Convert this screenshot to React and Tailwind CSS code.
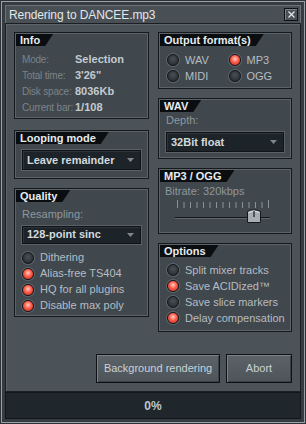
import React from "react";

const font = { fontFamily: '"Liberation Sans", Arial, sans-serif' };

function Tab({ children }) {
  return (
    <div className="flex">
      <div className="h-[12px] bg-[#0b0e11] pl-[4px] pr-[13px] text-[11px] leading-[12px] font-bold text-[#e6ecf0] [clip-path:polygon(0_0,100%_0,calc(100%-8px)_100%,0_100%)]">
        {children}
      </div>
    </div>
  );
}

function Panel({ title, className = "", children }) {
  return (
    <div
      className={`border border-[#15191c] bg-[#40474d] p-px shadow-[inset_1px_1px_0_#5b6369,inset_-1px_-1px_0_#5b6369] ${className}`}
    >
      <Tab>{title}</Tab>
      {children}
    </div>
  );
}

function Radio({ on, label }) {
  return (
    <div className="flex items-center h-[16px] gap-[6px]">
      <div
        className={`w-[12px] h-[12px] shrink-0 rounded-full border border-[#15191c] shadow-[0_0_0_1px_#5e666c] ${
          on
            ? "bg-[radial-gradient(circle_at_50%_40%,#ffd0c4_0%,#ff5a48_45%,#c0281c_100%)]"
            : "bg-[radial-gradient(circle_at_50%_40%,#4a5055_0%,#2c3135_70%,#202427_100%)]"
        }`}
      />
      <span className="text-[11px] whitespace-nowrap text-[#b4bdc3]">{label}</span>
    </div>
  );
}

function Select({ value, className = "" }) {
  return (
    <div
      className={`flex items-center justify-between border border-[#101316] bg-[#1d2429] shadow-[0_0_0_1px_#596167,inset_1px_1px_0_#2c343a] pl-[4px] pr-[6px] ${className}`}
    >
      <span className="text-[11px] font-bold text-[#d2dade]">{value}</span>
      <svg width="7" height="4" viewBox="0 0 7 4">
        <path d="M0 0 H7 L3.5 4 Z" fill="#7e878d" />
      </svg>
    </div>
  );
}

function InfoRow({ label, value }) {
  return (
    <div className="flex h-[16px] items-center whitespace-nowrap">
      <span className="w-[53px] shrink-0 text-[10px] tracking-[-0.2px] text-[#7b848a]">{label}</span>
      <span className="text-[11px] font-bold text-[#c3cbd0]">{value}</span>
    </div>
  );
}

function Slider() {
  const ticks = [];
  for (let i = 0; i < 15; i++) {
    const x = 2.5 + i * 6.5;
    const tall = i === 0 || i === 14;
    ticks.push(
      <line key={i} x1={x} x2={x} y1={tall ? 0 : 2} y2={8} stroke="#8b9399" strokeWidth="1" />
    );
  }
  return (
    <svg width="100" height="26" viewBox="0 0 100 26" className="ml-[15px] mt-[2px]">
      {ticks}
      <line x1="0" x2="95" y1="17.5" y2="17.5" stroke="#14181b" strokeWidth="1" />
      <line x1="0" x2="95" y1="18.5" y2="18.5" stroke="#5f676d" strokeWidth="1" />
      <path d="M72.5 11.5 Q78.5 8 85.5 11.5 V22.5 H72.5 Z" fill="#a6aeb3" stroke="#14181b" />
      <path d="M73.5 12.5 Q78.5 9.5 84.5 12.5" fill="none" stroke="#dfe5e8" />
      <line x1="79" x2="79" y1="11" y2="17" stroke="#14181b" strokeWidth="1.2" />
    </svg>
  );
}

function Button({ children, className = "" }) {
  return (
    <div
      className={`flex items-center justify-center border border-[#0f1214] bg-[linear-gradient(#5b6369,#4d555b)] shadow-[inset_1px_1px_0_#7a8288,inset_-1px_-1px_0_#3a4146] text-[11px] text-[#c9d1d6] ${className}`}
    >
      {children}
    </div>
  );
}

export default function App() {
  return (
    <div className="w-[306px] h-[424px] bg-[#2d3237] p-px" style={font}>
      <div className="h-full border border-[#9aa1a6] bg-[#353b40] p-[3px] flex flex-col">
        <div className="h-[18px] flex items-center justify-between pl-[3px] pr-[2px] bg-[#484f55] border-x border-t border-[#6b7379]">
          <span className="text-[12px] text-[#e2e7ea] tracking-[-0.1px]">Rendering to DANCEE.mp3</span>
          <div className="w-[14px] h-[13px] border border-[#0f1214] shadow-[inset_1px_1px_0_#7a8288] bg-[#4a5157] flex items-center justify-center">
            <svg width="7" height="7" viewBox="0 0 7 7">
              <path d="M0.5 0.5 L6.5 6.5 M6.5 0.5 L0.5 6.5" stroke="#dfe4e7" strokeWidth="1.3" />
            </svg>
          </div>
        </div>
        <div className="flex-1 flex flex-col border border-[#1b1f23] bg-[#4b5359] shadow-[inset_1px_1px_0_#5d656b]">
          <div className="flex gap-[9px] pl-[8px] pr-[8px] pt-[8px]">
            <div className="w-[135px] flex flex-col">
              <Panel title="Info" className="h-[87px]">
                <div className="pl-[6px] pt-[5px]">
                  <InfoRow label="Mode:" value="Selection" />
                  <InfoRow label="Total time:" value={"3'26\""} />
                  <InfoRow label="Disk space:" value="8036Kb" />
                  <InfoRow label="Current bar:" value="1/108" />
                </div>
              </Panel>
              <Panel title="Looping mode" className="h-[49px] mt-[11px]">
                <Select value="Leave remainder" className="h-[20px] mx-[6px] mt-[6px]" />
              </Panel>
              <Panel title="Quality" className="h-[129px] mt-[9px]">
                <div className="pl-[6px] pt-[4px] text-[11px] text-[#8e979d]">Resampling:</div>
                <Select value="128-point sinc" className="h-[18px] mx-[6px] mt-[3px]" />
                <div className="pl-[6px] mt-[6px] flex flex-col">
                  <Radio label="Dithering" />
                  <Radio on label="Alias-free TS404" />
                  <Radio on label="HQ for all plugins" />
                  <Radio on label="Disable max poly" />
                </div>
              </Panel>
            </div>
            <div className="w-[134px] flex flex-col">
              <Panel title="Output format(s)" className="h-[57px]">
                <div className="grid grid-cols-2 pl-[7px] pt-[6px]">
                  <Radio label="WAV" />
                  <Radio on label="MP3" />
                  <Radio label="MIDI" />
                  <Radio label="OGG" />
                </div>
              </Panel>
              <Panel title="WAV" className="h-[61px] mt-[9px]">
                <div className="pl-[6px] pt-[2px] text-[11px] text-[#8e979d] leading-[13px]">Depth:</div>
                <Select value="32Bit float" className="h-[20px] mx-[6px] mt-[5px]" />
              </Panel>
              <Panel title="MP3 / OGG" className="h-[66px] mt-[9px]">
                <div className="pl-[5px] pt-[3px] text-[11px] text-[#8e979d] leading-[13px]">Bitrate: 320kbps</div>
                <Slider />
              </Panel>
              <Panel title="Options" className="h-[89px] mt-[9px]">
                <div className="pl-[7px] pt-[5px] flex flex-col">
                  <Radio label="Split mixer tracks" />
                  <Radio on label="Save ACIDized™" />
                  <Radio label="Save slice markers" />
                  <Radio on label="Delay compensation" />
                </div>
              </Panel>
            </div>
          </div>
          <div className="flex-1" />
          <div className="flex justify-end gap-[6px] pr-[8px] pb-[8px]">
            <Button className="w-[124px] h-[29px]">Background rendering</Button>
            <Button className="w-[66px] h-[29px]">Abort</Button>
          </div>
        </div>
        <div className="h-[27px] bg-[#1f262c] border border-[#12161a] flex items-center justify-center text-[12px] font-bold text-[#bcc5cb]">
          0%
        </div>
      </div>
    </div>
  );
}
